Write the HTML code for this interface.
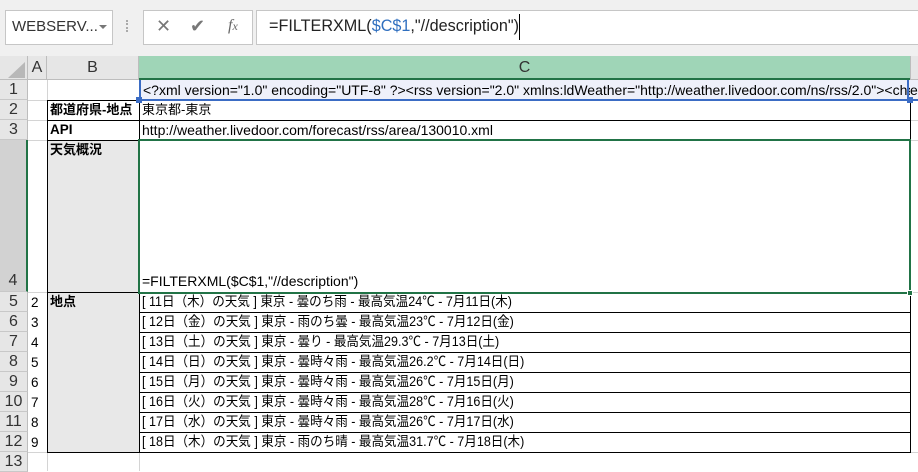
<!DOCTYPE html>
<html><head><meta charset="utf-8"><style>
*{margin:0;padding:0;box-sizing:border-box}
body{width:918px;height:471px;overflow:hidden;background:#fff;position:relative;font-family:"Liberation Sans","Noto Sans CJK JP",sans-serif;color:#000}
.a{position:absolute}
.t{font-size:13.5px;line-height:20px;white-space:nowrap;overflow:hidden}
.d{font-size:13.5px;line-height:20px;white-space:nowrap;transform:scaleX(0.93);transform-origin:0 0}
.rh{position:absolute;left:0;width:28px;background:#e6e6e6;border-bottom:1px solid #c8c8c8;border-right:1px solid #bdbdbd;font-size:16px;color:#333;text-align:center;line-height:20px}
.hl{position:absolute;height:1px;background:#000}
.gl{position:absolute;height:1px;background:#d4d4d4}
</style></head><body>
<div class="a" style="left:0;top:0;width:918px;height:56px;background:#f0f0f0"></div>
<div class="a" style="left:5px;top:10px;width:108px;height:35px;background:#fff;border:1px solid #c6c6c6"></div>
<div class="a" style="left:12px;top:18px;font-size:15px;color:#333">WEBSERV...</div>
<div class="a" style="left:99px;top:25px;width:0;height:0;border-left:4px solid transparent;border-right:4px solid transparent;border-top:4px solid #777"></div>
<div class="a" style="left:126px;top:20px;width:2px;height:12px;border-left:2px dotted #aaa"></div>
<div class="a" style="left:143px;top:10px;width:110px;height:35px;background:#fff;border:1px solid #c6c6c6"></div>
<div class="a" style="left:156px;top:16px;font-size:18px;color:#777">✕</div>
<div class="a" style="left:190px;top:16px;font-size:18px;color:#777">✔</div>
<div class="a" style="left:228px;top:17px;font-size:16px;color:#666;font-style:italic;font-family:'Liberation Serif',serif">f<span style="font-size:12px">x</span></div>
<div class="a" style="left:256px;top:10px;width:662px;height:35px;background:#fff;border:1px solid #c6c6c6;border-right:none"></div>
<div class="a" style="left:269px;top:17px;font-size:16.2px;color:#222">=FILTERXML(<span style="color:#2f6fbf">$C$1</span>,"//description")</div>
<div class="a" style="left:519px;top:14px;width:1px;height:26px;background:#000"></div>

<div class="a" style="left:0;top:56px;width:918px;height:24px;background:#e6e6e6;border-bottom:1px solid #bdbdbd"></div>
<div class="a" style="left:0;top:56px;width:28px;height:24px;border-right:1px solid #bdbdbd"></div>
<div class="a" style="left:8px;top:62px;width:0;height:0;border-left:17px solid transparent;border-bottom:16px solid #b8b8b8"></div>
<div class="a" style="left:28px;top:56px;width:19px;height:24px;border-right:1px solid #bdbdbd;text-align:center;font-size:16px;line-height:24px;color:#333">A</div>
<div class="a" style="left:47px;top:56px;width:92px;height:24px;border-right:1px solid #bdbdbd;text-align:center;font-size:16px;line-height:24px;color:#333">B</div>
<div class="a" style="left:139px;top:56px;width:771px;height:24px;background:#9fd5b7;border-bottom:2px solid #217346;text-align:center;font-size:16px;line-height:24px;color:#333">C</div>
<div class="a" style="left:910px;top:56px;width:1px;height:24px;background:#bdbdbd"></div>

<div class="rh" style="top:80px;height:20px">1</div>
<div class="rh" style="top:100px;height:20px">2</div>
<div class="rh" style="top:120px;height:20px">3</div>
<div class="rh" style="top:140px;height:152px;background:#d2d2d2;border-right:2px solid #217346;line-height:282px">4</div>
<div class="rh" style="top:292px;height:20px">5</div>
<div class="rh" style="top:312px;height:20px">6</div>
<div class="rh" style="top:332px;height:20px">7</div>
<div class="rh" style="top:352px;height:20px">8</div>
<div class="rh" style="top:372px;height:20px">9</div>
<div class="rh" style="top:392px;height:20px">10</div>
<div class="rh" style="top:412px;height:20px">11</div>
<div class="rh" style="top:432px;height:20px">12</div>
<div class="rh" style="top:452px;height:20px">13</div>

<div class="a" style="left:47px;top:80px;width:1px;height:391px;background:#d4d4d4"></div>
<div class="gl" style="left:28px;top:100px;width:19px"></div>
<div class="gl" style="left:28px;top:120px;width:19px"></div>
<div class="gl" style="left:28px;top:140px;width:19px"></div>
<div class="gl" style="left:28px;top:292px;width:19px"></div>
<div class="gl" style="left:28px;top:452px;width:890px"></div>
<div class="gl" style="left:910px;top:100px;width:8px"></div>
<div class="gl" style="left:910px;top:120px;width:8px"></div>
<div class="gl" style="left:910px;top:140px;width:8px"></div>
<div class="gl" style="left:910px;top:292px;width:8px"></div>
<div class="a" style="left:139px;top:452px;width:1px;height:19px;background:#d4d4d4"></div>

<div class="a" style="left:48px;top:140px;width:91px;height:312px;background:#e8e8e8"></div>

<div class="hl" style="left:47px;top:100px;width:864px"></div>
<div class="hl" style="left:47px;top:120px;width:864px"></div>
<div class="hl" style="left:47px;top:140px;width:864px"></div>
<div class="hl" style="left:47px;top:292px;width:864px"></div>
<div class="hl" style="left:139px;top:312px;width:772px"></div>
<div class="hl" style="left:139px;top:332px;width:772px"></div>
<div class="hl" style="left:139px;top:352px;width:772px"></div>
<div class="hl" style="left:139px;top:372px;width:772px"></div>
<div class="hl" style="left:139px;top:392px;width:772px"></div>
<div class="hl" style="left:139px;top:412px;width:772px"></div>
<div class="hl" style="left:139px;top:432px;width:772px"></div>
<div class="hl" style="left:47px;top:452px;width:864px"></div>
<div class="a" style="left:47px;top:100px;width:1px;height:353px;background:#000"></div>
<div class="a" style="left:139px;top:80px;width:1px;height:373px;background:#000"></div>
<div class="a" style="left:910px;top:100px;width:1px;height:353px;background:#000"></div>

<div class="a" style="left:139px;top:80px;width:779px;height:21px;background:#eef0fa;border-bottom:2px solid #3b6cc4;border-left:2px solid #3b6cc4"></div>
<div class="a t" style="left:143px;top:80px;width:767px;font-size:14px">&lt;?xml version="1.0" encoding="UTF-8" ?&gt;&lt;rss version="2.0" xmlns:ldWeather="http://weather.livedoor.com/ns/rss/2.0"&gt;&lt;channel&gt;</div>
<div class="a t" style="left:910px;top:80px;width:8px;font-size:14px">e</div>
<div class="a" style="left:907px;top:80px;width:2px;height:21px;background:#3b6cc4"></div>
<div class="a" style="left:136px;top:97px;width:6px;height:6px;background:#3b6cc4"></div>
<div class="a" style="left:907px;top:97px;width:6px;height:6px;background:#3b6cc4"></div>

<div class="a t" style="left:50px;top:100px;font-weight:bold;font-size:13px">都道府県-地点</div>
<div class="a t" style="left:142px;top:100px;font-size:13px">東京都-東京</div>
<div class="a t" style="left:50px;top:120px;font-weight:bold">API</div>
<div class="a t" style="left:142px;top:120px;font-size:14px">http://weather.livedoor.com/forecast/rss/area/130010.xml</div>
<div class="a t" style="left:50px;top:140px;font-weight:bold;font-size:13px">天気概況</div>
<div class="a t" style="left:142px;top:271px;font-size:14px">=FILTERXML($C$1,"//description")</div>
<div class="a t" style="left:50px;top:292px;font-weight:bold;font-size:13px">地点</div>

<div class="a t" style="left:31px;top:293px">2</div>
<div class="a t" style="left:31px;top:313px">3</div>
<div class="a t" style="left:31px;top:333px">4</div>
<div class="a t" style="left:31px;top:353px">5</div>
<div class="a t" style="left:31px;top:373px">6</div>
<div class="a t" style="left:31px;top:393px">7</div>
<div class="a t" style="left:31px;top:413px">8</div>
<div class="a t" style="left:31px;top:433px">9</div>

<div class="a d" style="left:142px;top:292px">[ 11日（木）の天気 ] 東京 - 曇のち雨 - 最高気温24℃ - 7月11日(木)</div>
<div class="a d" style="left:142px;top:312px">[ 12日（金）の天気 ] 東京 - 雨のち曇 - 最高気温23℃ - 7月12日(金)</div>
<div class="a d" style="left:142px;top:332px">[ 13日（土）の天気 ] 東京 - 曇り - 最高気温29.3℃ - 7月13日(土)</div>
<div class="a d" style="left:142px;top:352px">[ 14日（日）の天気 ] 東京 - 曇時々雨 - 最高気温26.2℃ - 7月14日(日)</div>
<div class="a d" style="left:142px;top:372px">[ 15日（月）の天気 ] 東京 - 曇時々雨 - 最高気温26℃ - 7月15日(月)</div>
<div class="a d" style="left:142px;top:392px">[ 16日（火）の天気 ] 東京 - 曇時々雨 - 最高気温28℃ - 7月16日(火)</div>
<div class="a d" style="left:142px;top:412px">[ 17日（水）の天気 ] 東京 - 曇時々雨 - 最高気温26℃ - 7月17日(水)</div>
<div class="a d" style="left:142px;top:432px">[ 18日（木）の天気 ] 東京 - 雨のち晴 - 最高気温31.7℃ - 7月18日(木)</div>

<div class="a" style="left:138px;top:139px;width:773px;height:155px;border:2px solid #217346"></div>
<div class="a" style="left:907px;top:290px;width:6px;height:6px;background:#217346;border:1px solid #fff"></div>
</body></html>
